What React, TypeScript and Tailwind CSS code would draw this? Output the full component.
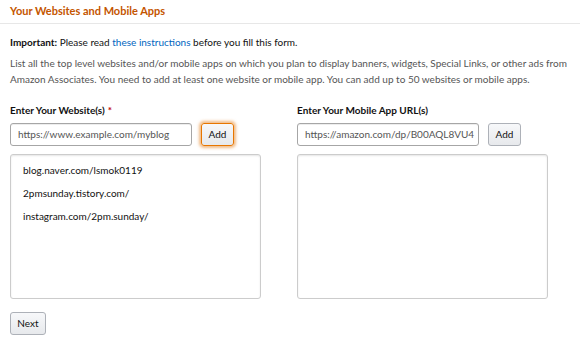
import React from "react";

const font = { fontFamily: '"Lato", "Open Sans", sans-serif' };

function Column({
  label,
  required,
  placeholder,
  focused,
  items,
}: {
  label: string;
  required?: boolean;
  placeholder: string;
  focused?: boolean;
  items: string[];
}) {
  return (
    <div className="flex flex-col">
      <div className="text-[10px] font-bold text-[#111] leading-[14px] h-[14px]">
        {label}
        {required && <span className="text-[#c40000] ml-[3px]">*</span>}
      </div>
      <div className="mt-[6px] flex items-center">
        <div className="w-[182px] h-[23px] border border-[#a6a6a6] rounded-[3px] px-[7px] flex items-center text-[10px] text-[#555] overflow-hidden whitespace-nowrap shadow-[inset_0_1px_0_rgba(0,0,0,0.07)]">
          {placeholder}
        </div>
        <button
          className={
            "ml-[9px] w-[33px] h-[23px] rounded-[3px] border text-[10px] text-[#111] bg-gradient-to-b from-[#f7f8fa] to-[#e7e9ec] " +
            (focused
              ? "border-[#e77600] shadow-[0_0_3px_2px_rgba(228,121,17,0.5)]"
              : "border-[#adb1b8]")
          }
        >
          Add
        </button>
      </div>
      <div className="mt-[8px] w-[251px] h-[145px] border border-[#ccc] rounded-[3px] pt-[4px] px-[12px] shadow-[inset_0_1px_2px_rgba(0,0,0,0.1)]">
        {items.map((it) => (
          <div key={it} className="h-[23px] flex items-center text-[10px] text-[#111]">
            {it}
          </div>
        ))}
      </div>
    </div>
  );
}

export default function App() {
  return (
    <div className="w-[580px] h-[342px] bg-white overflow-hidden" style={font}>
      <div className="h-[24px] border-b border-[#e7e7e7] px-[10px] flex items-center">
        <span className="text-[11px] font-bold text-[#c45500]">Your Websites and Mobile Apps</span>
      </div>
      <div className="px-[10px]">
        <p className="mt-[11px] text-[10px] leading-[14px] text-[#111]">
          <b>Important:</b> Please read{" "}
          <span className="text-[#0066c0]">these instructions</span> before you fill this form.
        </p>
        <p className="mt-[6px] text-[10px] leading-[16px] text-[#555]">
          List all the top level websites and/or mobile apps on which you plan to display banners, widgets, Special Links, or other ads from Amazon Associates. You need to add at least one website or mobile app. You can add up to 50 websites or mobile apps.
        </p>
        <div className="mt-[16px] grid grid-cols-[287px_1fr]">
          <Column
            label="Enter Your Website(s)"
            required
            placeholder="https://www.example.com/myblog"
            focused
            items={["blog.naver.com/lsmok0119", "2pmsunday.tistory.com/", "instagram.com/2pm.sunday/"]}
          />
          <Column
            label="Enter Your Mobile App URL(s)"
            placeholder="https://amazon.com/dp/B00AQL8VU4"
            items={[]}
          />
        </div>
        <button className="mt-[13px] w-[36px] h-[23px] rounded-[3px] border border-[#adb1b8] bg-gradient-to-b from-[#f7f8fa] to-[#e7e9ec] text-[10px] text-[#111]">
          Next
        </button>
      </div>
    </div>
  );
}
